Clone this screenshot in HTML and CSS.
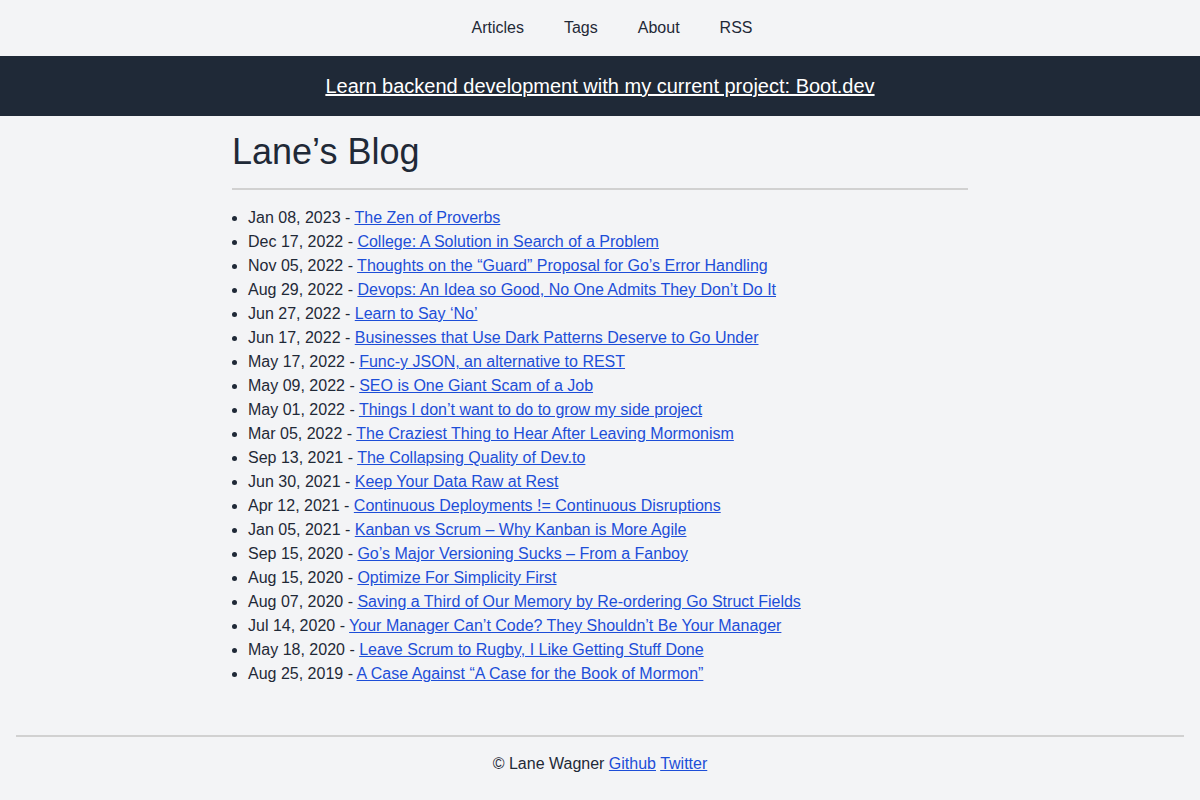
FILE: index.html
```html
<!DOCTYPE html>
<html lang="en">
<head>
    <meta charset="UTF-8">
    <meta name="viewport" content="width=device-width, initial-scale=1.0">
    <title>Lane's Blog</title>
    <link rel="stylesheet" href="styles.css">
</head>
<body>
    <nav class="topnav">
        <a href="#">Articles</a>
        <a href="#">Tags</a>
        <a href="#">About</a>
        <a href="#">RSS</a>
    </nav>

    <div class="banner">
        <a href="#">Learn backend development with my current project: Boot.dev</a>
    </div>

    <main class="container">
        <h1>Lane’s Blog</h1>
        <hr>
        <ul class="posts">
            <li>Jan 08, 2023 - <a href="#">The Zen of Proverbs</a></li>
            <li>Dec 17, 2022 - <a href="#">College: A Solution in Search of a Problem</a></li>
            <li>Nov 05, 2022 - <a href="#">Thoughts on the “Guard” Proposal for Go’s Error Handling</a></li>
            <li>Aug 29, 2022 - <a href="#">Devops: An Idea so Good, No One Admits They Don’t Do It</a></li>
            <li>Jun 27, 2022 - <a href="#">Learn to Say ‘No’</a></li>
            <li>Jun 17, 2022 - <a href="#">Businesses that Use Dark Patterns Deserve to Go Under</a></li>
            <li>May 17, 2022 - <a href="#">Func-y JSON, an alternative to REST</a></li>
            <li>May 09, 2022 - <a href="#">SEO is One Giant Scam of a Job</a></li>
            <li>May 01, 2022 - <a href="#">Things I don’t want to do to grow my side project</a></li>
            <li>Mar 05, 2022 - <a href="#">The Craziest Thing to Hear After Leaving Mormonism</a></li>
            <li>Sep 13, 2021 - <a href="#">The Collapsing Quality of Dev.to</a></li>
            <li>Jun 30, 2021 - <a href="#">Keep Your Data Raw at Rest</a></li>
            <li>Apr 12, 2021 - <a href="#">Continuous Deployments != Continuous Disruptions</a></li>
            <li>Jan 05, 2021 - <a href="#">Kanban vs Scrum – Why Kanban is More Agile</a></li>
            <li>Sep 15, 2020 - <a href="#">Go’s Major Versioning Sucks – From a Fanboy</a></li>
            <li>Aug 15, 2020 - <a href="#">Optimize For Simplicity First</a></li>
            <li>Aug 07, 2020 - <a href="#">Saving a Third of Our Memory by Re-ordering Go Struct Fields</a></li>
            <li>Jul 14, 2020 - <a href="#">Your Manager Can’t Code? They Shouldn’t Be Your Manager</a></li>
            <li>May 18, 2020 - <a href="#">Leave Scrum to Rugby, I Like Getting Stuff Done</a></li>
            <li>Aug 25, 2019 - <a href="#">A Case Against “A Case for the Book of Mormon”</a></li>
        </ul>
    </main>

    <footer class="footer">
        <hr>
        <p>© Lane Wagner <a href="#">Github</a> <a href="#">Twitter</a></p>
    </footer>
</body>
</html>
```

FILE: styles.css
```css
*{
    margin: 0;
    padding: 0;
    box-sizing: border-box;
}

:root{
    --background: #f3f4f6;
    --dark: #1f2937;
    --text: #1f2937;
    --link: #1d4ed8;
    --rule: #d1d1d1;
}

body{
    background-color: var(--background);
    color: var(--text);
    font-family: "Liberation Sans", Arial, sans-serif;
    font-size: 16px;
    line-height: 24px;
}

.topnav{
    height: 56px;
    display: flex;
    justify-content: center;
    align-items: center;
    gap: 40px;
    padding-left: 24px;
}

.topnav a{
    color: var(--text);
    text-decoration: none;
}

.banner{
    height: 60px;
    background-color: var(--dark);
    display: flex;
    align-items: center;
    justify-content: center;
    font-size: 20px;
}

.banner a{
    color: #fff;
}

.container{
    max-width: 736px;
    margin: 0 auto;
}

h1{
    font-size: 36px;
    line-height: 40px;
    font-weight: normal;
    margin-top: 16px;
    margin-bottom: 16px;
}

hr{
    border: none;
    border-top: 2px solid var(--rule);
}

.posts{
    margin-top: 16px;
    padding-left: 16px;
}

a{
    color: var(--link);
}

.footer{
    margin-top: 49px;
    padding: 0 16px 25px 16px;
    text-align: center;
}

.footer p{
    margin-top: 15px;
}
```
